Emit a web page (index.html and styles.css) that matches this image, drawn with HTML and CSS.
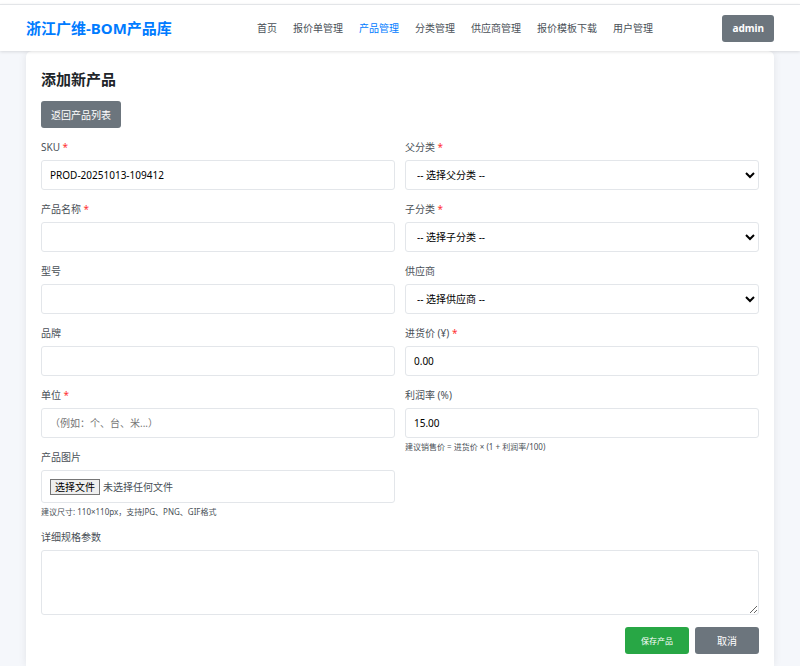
FILE: index.html
```html
<!DOCTYPE html>
<html lang="zh-CN">
<head>
<meta charset="utf-8">
<meta name="viewport" content="width=device-width, initial-scale=1">
<title>添加新产品</title>
<link rel="stylesheet" href="styles.css">
</head>
<body>
<header class="navbar">
  <a class="brand" href="#">浙江广维-BOM产品库</a>
  <nav class="nav">
    <a href="#">首页</a>
    <a href="#">报价单管理</a>
    <a class="active" href="#">产品管理</a>
    <a href="#">分类管理</a>
    <a href="#">供应商管理</a>
    <a href="#">报价模板下载</a>
    <a href="#">用户管理</a>
  </nav>
  <button class="btn btn-user" type="button">admin</button>
</header>
<main class="card">
  <h1>添加新产品</h1>
  <a class="btn btn-back" href="#">返回产品列表</a>
  <form>
    <div class="columns">
      <div class="column">
        <div class="field">
          <label for="sku">SKU <span class="required">*</span></label>
          <input class="control" id="sku" type="text" value="PROD-20251013-109412">
        </div>
        <div class="field">
          <label for="name">产品名称 <span class="required">*</span></label>
          <input class="control" id="name" type="text">
        </div>
        <div class="field">
          <label for="model">型号</label>
          <input class="control" id="model" type="text">
        </div>
        <div class="field">
          <label for="brand">品牌</label>
          <input class="control" id="brand" type="text">
        </div>
        <div class="field">
          <label for="unit">单位 <span class="required">*</span></label>
          <input class="control" id="unit" type="text" placeholder="（例如：个、台、米...）">
        </div>
        <div class="field">
          <label for="image">产品图片</label>
          <label class="control file" for="image">
            <input class="file-input" id="image" type="file" accept="image/*">
            <span class="file-button">选择文件</span>
            <span>未选择任何文件</span>
          </label>
          <small>建议尺寸: 110×110px，支持JPG、PNG、GIF格式</small>
        </div>
      </div>
      <div class="column">
        <div class="field">
          <label for="parent">父分类 <span class="required">*</span></label>
          <select class="control" id="parent"><option>-- 选择父分类 --</option></select>
        </div>
        <div class="field">
          <label for="child">子分类 <span class="required">*</span></label>
          <select class="control" id="child"><option>-- 选择子分类 --</option></select>
        </div>
        <div class="field">
          <label for="supplier">供应商</label>
          <select class="control" id="supplier"><option>-- 选择供应商 --</option></select>
        </div>
        <div class="field">
          <label for="cost">进货价 (¥) <span class="required">*</span></label>
          <input class="control" id="cost" type="number" step="0.01" value="0.00">
        </div>
        <div class="field">
          <label for="margin">利润率 (%)</label>
          <input class="control" id="margin" type="number" step="0.01" value="15.00">
          <small>建议销售价 = 进货价 × (1 + 利润率/100)</small>
        </div>
      </div>
    </div>
    <div class="field">
      <label for="spec">详细规格参数</label>
      <textarea class="control" id="spec"></textarea>
    </div>
    <div class="actions">
      <button class="btn btn-save" type="submit">保存产品</button>
      <a class="btn btn-cancel" href="#">取消</a>
    </div>
  </form>
</main>
</body>
</html>
```

FILE: styles.css
```css
* { box-sizing: border-box; }

body {
  display: flex;
  flex-direction: column;
  min-height: 100vh;
  margin: 0;
  padding-top: 4px;
  background: linear-gradient(#fff 4px, #f5f7fb 4px);
  color: #495057;
  font: 10px/14px "Noto Sans", "Noto Sans CJK SC", sans-serif;
}

a { color: inherit; text-decoration: none; }

.navbar {
  position: relative;
  display: flex;
  align-items: center;
  justify-content: space-between;
  height: 47px;
  padding: 0 26px;
  background: #fff;
  border-top: 1px solid #e3e5e8;
  box-shadow: 0 1px 3px rgba(0, 0, 0, 0.12);
}

.brand { color: #007bff; font-size: 15px; font-weight: 700; line-height: 20px; }
.nav { display: flex; gap: 16px; padding-left: 16px; }
.nav .active { color: #007bff; }

.btn {
  display: inline-flex;
  align-items: center;
  justify-content: center;
  height: 27px;
  padding: 0 10px;
  border: 0;
  border-radius: 3px;
  background: #6c757d;
  color: #fff;
  font: inherit;
}

.btn-user { font-weight: 700; }

.card {
  flex: 1;
  margin: 0 26px;
  padding: 18px 15px 10px;
  background: #fff;
  border-radius: 6px 6px 0 0;
  box-shadow: 0 0 8px rgba(0, 0, 0, 0.08);
}

h1 { margin: 0 0 12px; color: #212529; font-size: 15px; line-height: 20px; }

.columns { display: flex; gap: 10px; margin-top: 12px; }
.column { flex: 1; min-width: 0; }

.field { margin-bottom: 12px; }
.field > label { display: block; }
.required { color: #ff3333; }

.field > .control {
  display: block;
  width: 100%;
  height: 30px;
  margin-top: 6px;
  padding: 0 8px;
  border: 1px solid #e3e6ea;
  border-radius: 3px;
  background: #fff;
  color: #000;
  font: inherit;
}

.control::placeholder { color: #757575; }
.field > select.control { padding: 0 3px 0 7px; }
.field > textarea.control { height: 65px; padding: 8px; resize: vertical; }

.field > .file {
  display: flex;
  align-items: center;
  gap: 3px;
  height: 33px;
  color: #495057;
}

.file-input { position: absolute; width: 1px; height: 1px; opacity: 0; }

.file-button {
  padding: 0 4px;
  border: 1px solid #767676;
  background: #efefef;
  color: #000;
}

small { display: block; margin-top: 3px; font-size: 8px; line-height: 12px; }

.actions { display: flex; justify-content: flex-end; gap: 6px; }
.btn-save, .btn-cancel { min-width: 64px; }
.btn-save { background: #28a745; font-size: 8px; }
```
